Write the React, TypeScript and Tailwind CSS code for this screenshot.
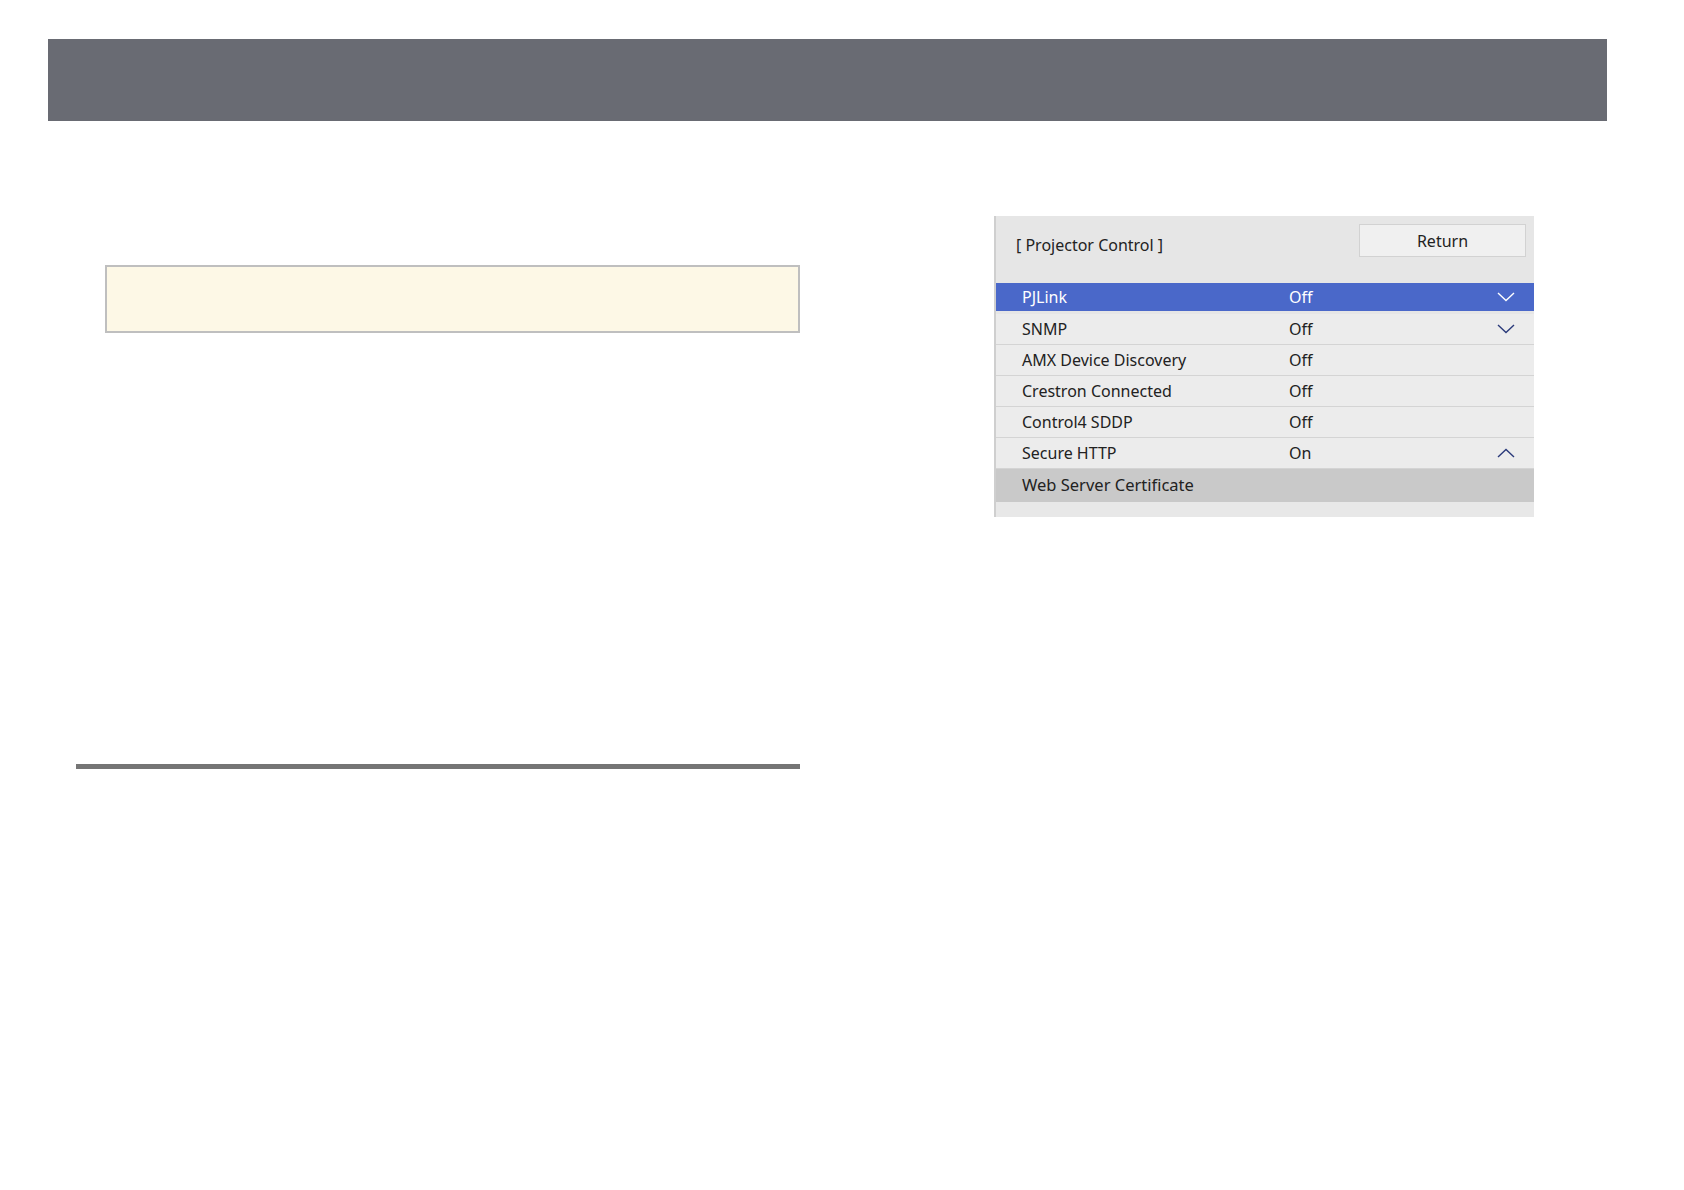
import React from "react";

const Chevron = ({ up }: { up?: boolean }) => (
  <svg width="18" height="10" viewBox="0 0 18 10" fill="none">
    <path
      d={up ? "M1 9 L9 1.5 L17 9" : "M1 1 L9 8.5 L17 1"}
      stroke="currentColor"
      strokeWidth="1.4"
      strokeLinejoin="miter"
    />
  </svg>
);

type Row = { name: string; value?: string; chev?: "down" | "up"; active?: boolean };

const rows: Row[] = [
  { name: "PJLink", value: "Off", chev: "down", active: true },
  { name: "SNMP", value: "Off", chev: "down" },
  { name: "AMX Device Discovery", value: "Off" },
  { name: "Crestron Connected", value: "Off" },
  { name: "Control4 SDDP", value: "Off" },
  { name: "Secure HTTP", value: "On", chev: "up" },
];

export default function App() {
  return (
    <div className="w-[1684px] h-[1190px] bg-white" style={{ fontFamily: '"Noto Sans", "Open Sans", sans-serif' }}>
      <div className="pt-[39px] pl-[48px]">
        <div className="w-[1559px] h-[82px] bg-[#696b73]" />
      </div>
      <div className="flex">
        <div className="ml-[76px] w-[724px] flex flex-col">
          <div className="mt-[144px] ml-[29px] h-[68px] border-2 border-[#bfbfbf] bg-[#fdf8e6]" />
          <div className="mt-[431px] h-[5px] bg-[#757575]" />
        </div>
        <div className="ml-[194px] mt-[95px] w-[540px] h-[301px] bg-[#e6e6e6] border-l-2 border-[#cfcfcf] flex flex-col">
          <div className="h-[67px] flex items-start justify-between pr-[8px]">
            <div className="mt-[17px] ml-[20px] text-[16px] text-[#222]">[ Projector Control ]</div>
            <div className="mt-[8px] w-[167px] h-[33px] bg-[#f0f0f0] border border-[#d2d2d2] flex items-center justify-center text-[16px] text-[#222]">
              Return
            </div>
          </div>
          {rows.map((r) => (
            <div
              key={r.name}
              className={
                r.active
                  ? "h-[31px] flex items-center bg-[#4a68c9] text-white border-b-[3px] border-[#e6e6e6]"
                  : "h-[31px] flex items-center bg-[#ececec] text-[#222] border-b border-[#d4d4d4]"
              }
            >
              <div className="w-[293px] pl-[26px] text-[16px]">{r.name}</div>
              <div className="flex-1 text-[16px]">{r.value}</div>
              <div className={r.active ? "w-[37px] text-white" : "w-[37px] text-[#2a3a7a]"}>
                {r.chev && <Chevron up={r.chev === "up"} />}
              </div>
            </div>
          ))}
          <div className="h-[33px] flex items-center bg-[#c9c9c9] text-[#222]">
            <div className="pl-[26px] text-[16.5px]">Web Server Certificate</div>
          </div>
          <div className="flex-1 bg-[#e8e8e8]" />
        </div>
      </div>
    </div>
  );
}
